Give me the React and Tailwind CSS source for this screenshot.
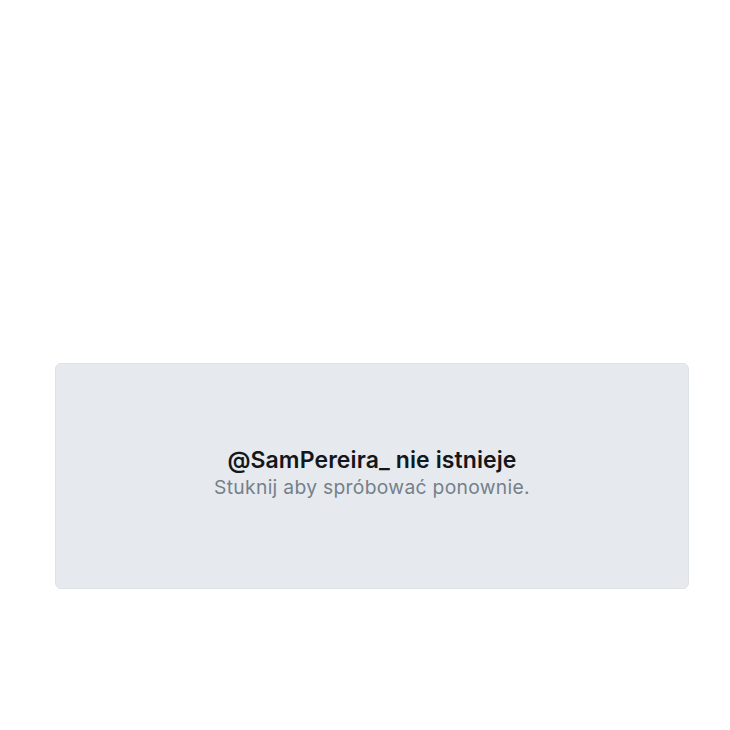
export default function App() {
  return (
    <div className="w-[730px] h-[730px] bg-white pt-[363px] pl-[55px] pr-[41px]" style={{ fontFamily: "Inter, 'Noto Sans', sans-serif" }}>
      <button className="w-full h-[226px] rounded-[6px] bg-[#e6eaee] border border-[#dde2e7] flex flex-col items-center justify-center pb-[4px]">
        <span className="text-[23px] leading-[27px] font-semibold text-[#14171a] tracking-[0.1px]">@SamPereira_ nie istnieje</span>
        <span className="text-[19.3px] leading-[27px] text-[#74808b] tracking-[0.3px]">Stuknij aby spróbować ponownie.</span>
      </button>
    </div>
  );
}
